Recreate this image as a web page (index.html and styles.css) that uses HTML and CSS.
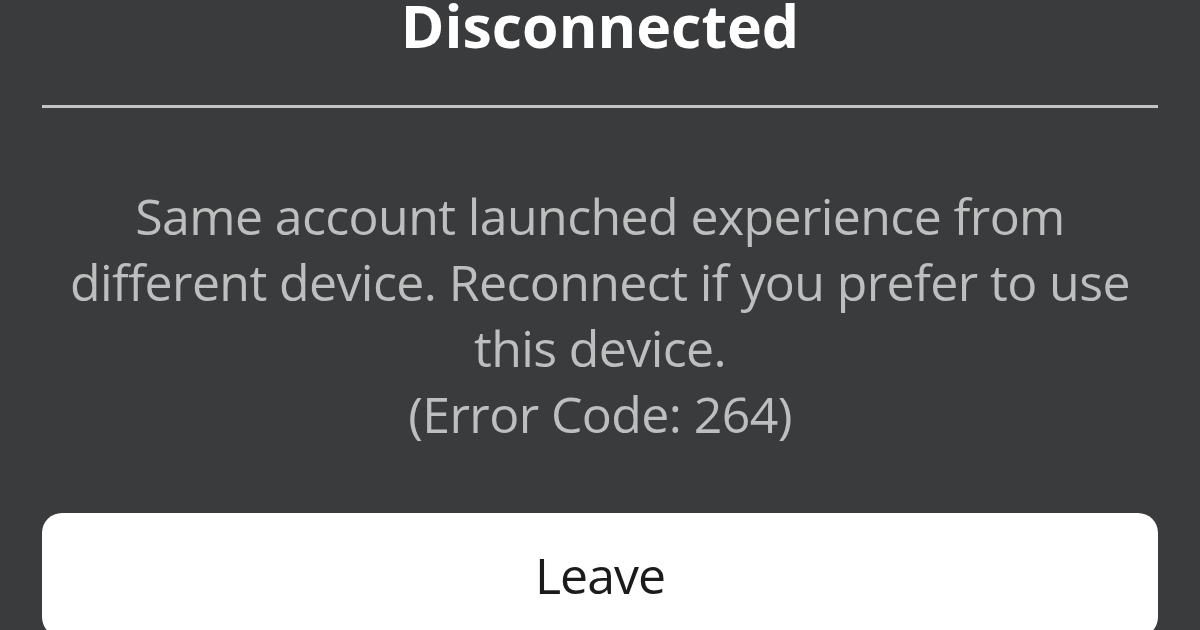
FILE: index.html
```html
<!DOCTYPE html>
<html lang="en">

<head>
    <meta charset="UTF-8">
    <meta name="viewport" content="width=device-width, initial-scale=1.0">
    <title>Disconnected</title>
    <link rel="stylesheet" href="styles.css">
</head>

<body>

    <div class="dialog">
        <h1 class="title">Disconnected</h1>
        <hr class="divider">
        <p class="message">Same account launched experience from different device. Reconnect if you prefer to use this device.<br>(Error Code: 264)</p>
        <button class="leave-btn">Leave</button>
    </div>

</body>

</html>
```

FILE: styles.css
```css
html,
body {
    margin: 0;
    height: 100%;
    overflow: hidden;
}

body {
    background: #393b3d;
    font-family: "Open Sans", "Noto Sans", sans-serif;
}

.dialog {
    padding: 0 42px;
}

.title {
    margin: -6px 0 0;
    font-size: 59px;
    line-height: 63px;
    font-weight: 700;
    color: #ffffff;
    text-align: center;
}

.divider {
    margin: 48px 0 0;
    border: 0;
    height: 3px;
    background: #c4c4c4;
}

.message {
    margin: 75px 0 0;
    padding: 0 10px;
    font-size: 50px;
    line-height: 66px;
    letter-spacing: -0.6px;
    color: #bdbebe;
    text-align: center;
}

.leave-btn {
    display: block;
    width: 100%;
    height: 124px;
    margin-top: 66px;
    border: 0;
    border-radius: 20px;
    background: #ffffff;
    color: #1b1b1b;
    font-family: inherit;
    font-size: 50px;
    letter-spacing: -1px;
}
```
